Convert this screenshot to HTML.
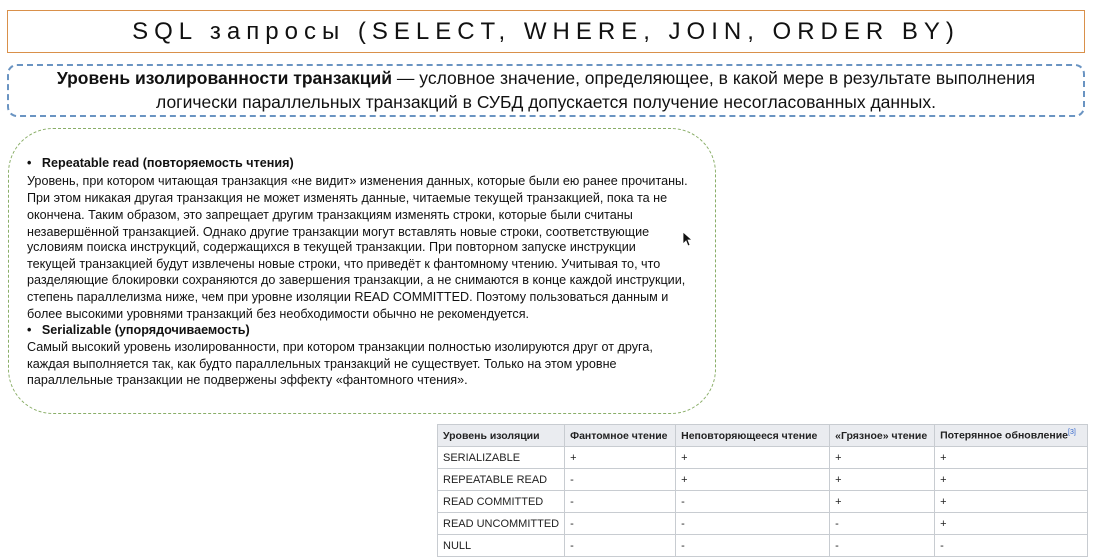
<!DOCTYPE html>
<html><head><meta charset="utf-8"><style>
body{margin:0;width:1102px;height:556px;background:#fff;position:relative;overflow:hidden;font-family:"Liberation Sans",sans-serif;color:#111}
.title{position:absolute;left:7px;top:10px;width:1076px;height:41px;border:1px solid #d9904a;text-align:center;font-size:24px;line-height:41px;letter-spacing:6px;color:#111}
.blue{position:absolute;left:7px;top:64px;width:1074px;height:49px;border:2px dashed #6a94c2;border-radius:10px}
.btext{position:absolute;left:0;width:1092px;text-align:center;font-size:17.5px;white-space:nowrap}
.green{position:absolute;left:8px;top:128px;width:706px;height:284px;border:1.5px dashed #8aae68;border-radius:45px}
.g{position:absolute;left:27px;font-size:12.6px;white-space:nowrap;line-height:14px}
table{position:absolute;left:437px;top:424px;border-collapse:collapse;font-size:11px;color:#222}
td,th{border:1px solid #c8ccd1;height:21px;padding:0 5px;text-align:left;white-space:nowrap}
th{background:#eaecf0;font-weight:bold;font-size:10.5px}
tr:nth-child(n+2) td{background:#fff}
</style></head><body>
<div class="title">SQL запросы (SELECT, WHERE, JOIN, ORDER BY)</div>
<div class="blue"></div>
<div class="btext" style="top:68px"><b>Уровень изолированности транзакций</b> — условное значение, определяющее, в какой мере в результате выполнения</div>
<div class="btext" style="top:92px">логически параллельных транзакций в СУБД допускается получение несогласованных данных.</div>
<div class="green"></div>
<div class="g" style="top:156px"><b>•&nbsp;&nbsp;&nbsp;Repeatable read (повторяемость чтения)</b></div>
<div class="g" style="top:174px">Уровень, при котором читающая транзакция «не видит» изменения данных, которые были ею ранее прочитаны.</div>
<div class="g" style="top:191px">При этом никакая другая транзакция не может изменять данные, читаемые текущей транзакцией, пока та не</div>
<div class="g" style="top:208px">окончена. Таким образом, это запрещает другим транзакциям изменять строки, которые были считаны</div>
<div class="g" style="top:225px">незавершённой транзакцией. Однако другие транзакции могут вставлять новые строки, соответствующие</div>
<div class="g" style="top:240px">условиям поиска инструкций, содержащихся в текущей транзакции. При повторном запуске инструкции</div>
<div class="g" style="top:257px">текущей транзакцией будут извлечены новые строки, что приведёт к фантомному чтению. Учитывая то, что</div>
<div class="g" style="top:273px">разделяющие блокировки сохраняются до завершения транзакции, а не снимаются в конце каждой инструкции,</div>
<div class="g" style="top:290px">степень параллелизма ниже, чем при уровне изоляции READ COMMITTED. Поэтому пользоваться данным и</div>
<div class="g" style="top:307px">более высокими уровнями транзакций без необходимости обычно не рекомендуется.</div>
<div class="g" style="top:323px"><b>•&nbsp;&nbsp;&nbsp;Serializable (упорядочиваемость)</b></div>
<div class="g" style="top:340px">Самый высокий уровень изолированности, при котором транзакции полностью изолируются друг от друга,</div>
<div class="g" style="top:357px">каждая выполняется так, как будто параллельных транзакций не существует. Только на этом уровне</div>
<div class="g" style="top:373px">параллельные транзакции не подвержены эффекту «фантомного чтения».</div>
<svg style="position:absolute;left:682px;top:231px" width="12" height="16"><path d="M1 1 L1 13 L4 10 L6 15 L8 14 L6 9 L10 9 Z" fill="#111" stroke="#fff" stroke-width=".8"/></svg>
<table>
<tr><th style="width:113px">Уровень изоляции</th><th style="width:100px">Фантомное чтение</th><th style="width:143px">Неповторяющееся чтение</th><th style="width:94px">«Грязное» чтение</th><th style="width:142px">Потерянное обновление<sup style="font-size:7px;color:#36c;font-weight:normal">[3]</sup></th></tr>
<tr><td>SERIALIZABLE</td><td>+</td><td>+</td><td>+</td><td>+</td></tr>
<tr><td>REPEATABLE READ</td><td>-</td><td>+</td><td>+</td><td>+</td></tr>
<tr><td>READ COMMITTED</td><td>-</td><td>-</td><td>+</td><td>+</td></tr>
<tr><td>READ UNCOMMITTED</td><td>-</td><td>-</td><td>-</td><td>+</td></tr>
<tr><td>NULL</td><td>-</td><td>-</td><td>-</td><td>-</td></tr>
</table>
</body></html>
